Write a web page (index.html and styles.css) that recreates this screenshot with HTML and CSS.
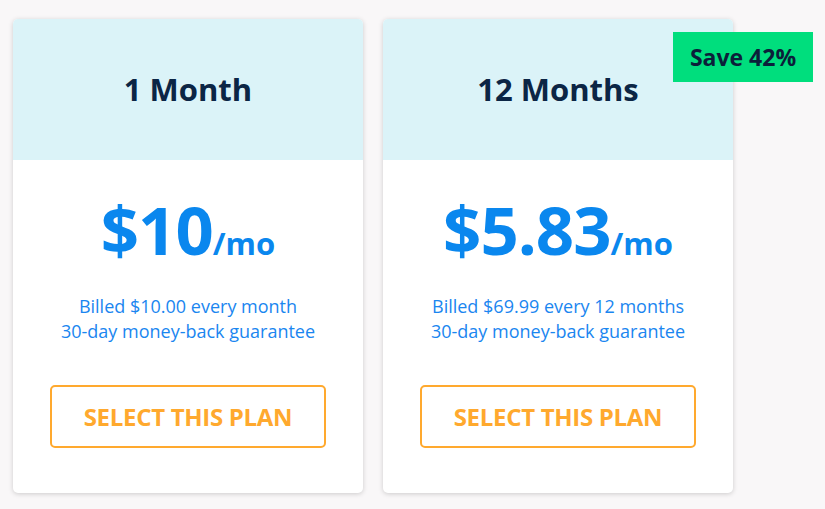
FILE: index.html
```html
<!DOCTYPE html>
<html>
<head>
<meta charset="utf-8">
<link rel="stylesheet" href="styles.css">
</head>
<body>
<div class="plans">
  <div class="card">
    <div class="card-head"><h2 class="title">1 Month</h2></div>
    <div class="card-body">
      <div class="price"><span class="amount">$10</span><span class="per">/mo</span></div>
      <p class="billed">Billed $10.00 every month<br>30-day money-back guarantee</p>
      <a class="btn">SELECT THIS PLAN</a>
    </div>
  </div>
  <div class="card">
    <div class="card-head"><h2 class="title">12 Months</h2></div>
    <div class="card-body">
      <div class="price"><span class="amount">$5.83</span><span class="per">/mo</span></div>
      <p class="billed">Billed $69.99 every 12 months<br>30-day money-back guarantee</p>
      <a class="btn">SELECT THIS PLAN</a>
    </div>
    <div class="badge">Save 42%</div>
  </div>
</div>
</body>
</html>
```
FILE: styles.css
```css
html, body {
  margin: 0;
  padding: 0;
}
body {
  background: #f9f7f8;
  font-family: "Open Sans", "Liberation Sans", sans-serif;
  width: 825px;
  height: 509px;
  overflow: hidden;
}
.plans {
  display: flex;
  gap: 20px;
  padding: 19px 0 0 13px;
}
.card {
  position: relative;
  width: 350px;
  height: 474px;
  background: #fff;
  border-radius: 5px;
  box-shadow: 0 1px 5px rgba(0, 0, 0, 0.18);
  display: flex;
  flex-direction: column;
}
.card-head {
  height: 141px;
  background: #dbf3f8;
  border-radius: 5px 5px 0 0;
  display: flex;
  align-items: center;
  justify-content: center;
}
.title {
  margin: 0 0 2px;
  font-size: 31px;
  font-weight: 700;
  color: #0b2545;
}
.card-body {
  display: flex;
  flex-direction: column;
  align-items: center;
  padding-top: 31px;
}
.price {
  color: #0a87ee;
  font-weight: 700;
  line-height: 76px;
  height: 76px;
}
.amount {
  font-size: 67px;
  letter-spacing: -1px;
}
.per {
  font-size: 31px;
}
.billed {
  margin: 27px 0 0;
  text-align: center;
  color: #1a86f0;
  font-size: 18px;
  line-height: 25px;
}
.btn {
  margin-top: 41px;
  box-sizing: border-box;
  width: 276px;
  height: 63px;
  border: 2px solid #ffa92e;
  border-radius: 5px;
  display: flex;
  align-items: center;
  justify-content: center;
  color: #ffa92e;
  font-weight: 700;
  font-size: 24px;
  letter-spacing: -0.3px;
}
.badge {
  position: absolute;
  top: 13px;
  left: 290px;
  width: 140px;
  height: 50px;
  background: #00de7d;
  color: #0b1f3a;
  font-weight: 700;
  font-size: 23px;
  display: flex;
  align-items: center;
  justify-content: center;
}
```
